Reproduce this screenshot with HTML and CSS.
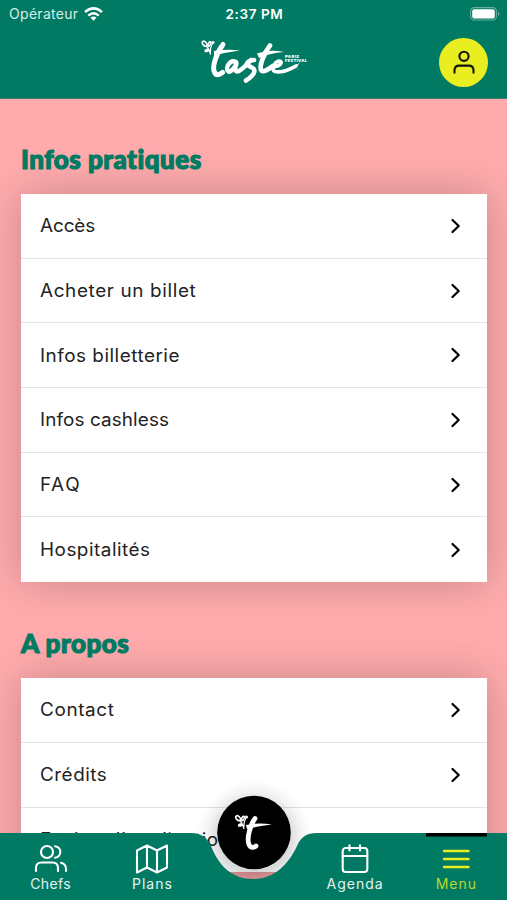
FILE: index.html
```html
<!DOCTYPE html>
<html lang="fr">
<head>
<meta charset="utf-8">
<title>Menu</title>
<link rel="stylesheet" href="styles.css">
</head>
<body>
<svg class="defs" width="0" height="0">
  <symbol id="chevron" viewBox="0 0 10 16"><path d="M1.5 2 L7.7 8 L1.5 14" fill="none" stroke="#000" stroke-width="2.2" stroke-linecap="round" stroke-linejoin="round"/></symbol>
  <symbol id="sprig" viewBox="0 0 16 17"><g fill="none" stroke="#fff" stroke-width="1.6"><ellipse cx="3.6" cy="4.2" rx="2.8" ry="1.8" transform="rotate(48 3.6 4.2)"/><ellipse cx="8.4" cy="4.4" rx="2.3" ry="1.1" transform="rotate(-65 8.4 4.4)"/></g><g fill="#fff"><ellipse cx="5.8" cy="11" rx="2.5" ry="1.7" transform="rotate(-15 5.8 11)"/><circle cx="12" cy="3" r="1.5"/></g><path d="M5 6 Q8 9 9.6 15 M11.6 3.5 Q9 8 9.4 13" fill="none" stroke="#fff" stroke-width="1.2"/></symbol>
</svg>
<div class="app">
  <header class="header">
    <div class="status">
      <div class="carrier"><span class="carrier-name">Opérateur</span>
        <svg width="19" height="14" viewBox="0 0 19 14"><g fill="none" stroke="#fff" stroke-width="2.5"><path d="M1 5.1 Q9.5 -2.3 18 5.1"/><path d="M4.3 8.6 Q9.5 4 14.7 8.6"/></g><path d="M6.5 10.7 Q9.5 8.3 12.5 10.7 L9.5 13.7Z" fill="#fff"/></svg>
      </div>
      <span class="clock">2:37 PM</span>
      <svg class="battery" width="30" height="14" viewBox="0 0 30 14"><rect x=".6" y=".6" width="25.8" height="12.4" rx="3.6" fill="none" stroke="#69b2a0" stroke-width="1.1"/><rect x="2.2" y="2.2" width="22.6" height="9.2" rx="2" fill="#fff"/><path d="M28 4.7 Q31 6.8 28 8.9Z" fill="#69b2a0"/></svg>
    </div>
    <div class="brand">
      <svg class="logo" width="110" height="50" viewBox="200 35 110 50">
        <use href="#sprig" x="201" y="39.5" width="16" height="17"/>
        <g fill="none" stroke="#fff" stroke-linecap="round" stroke-linejoin="round">
          <path d="M223 44.5 C217 52 211.5 67 214.5 72 C216 76 219 75 222.5 72.5" stroke-width="5"/>
          <path d="M236 62 C230 59 225 68 228 71 C230 74 236 66 236.5 63.5 C234 69 235 73 239 71 C243 69 246 65 251 60" stroke-width="4.5"/>
          <path d="M254 60 C246 61 245 65 251 67 C258 70 253 76 246 80.5" stroke-width="4.6"/>
          <path d="M270 45.5 C264 53 258.5 67 261.5 70.5 C264 73 270 68 273 66" stroke-width="4.8"/>
          <path d="M273 67 C281 66 283 61.5 279.5 61 C275 61 270 70 275 71.5 C281 73 289 70 296 66" stroke-width="3.7"/>
        </g>
        <path d="M214 51 Q228 49 240 50.5 Q228 52 214 55.5Z M257 53.5 Q269 49 284 52 Q270 53 259 58Z M283 70 Q291 67 300 63 Q292 72 282 73.4Z" fill="#fff"/>
        <text x="285" y="57.7" class="logo-small" textLength="14">PARIS</text>
        <text x="285" y="61.5" class="logo-small" textLength="22">FESTIVAL</text>
        <circle cx="298" cy="69" r=".6" fill="#9ccbbf"/>
      </svg>
      <a class="profile"><svg width="24" height="26" viewBox="0 0 24 26" fill="none" stroke="#17150a" stroke-width="2.1"><circle cx="12" cy="7.3" r="4.6"/><path d="M2.5 23.7V21.3Q2.5 16.6 7.2 16.6H16.8Q21.5 16.6 21.5 21.3V23.7" stroke-linecap="round"/></svg></a>
    </div>
  </header>
  <main class="content">
    <h2 class="title title-a">Infos pratiques</h2>
    <ul class="list">
      <li class="row"><span class="label tight">Accès</span><svg class="chev"><use href="#chevron"/></svg></li>
      <li class="row"><span class="label wide">Acheter un billet</span><svg class="chev"><use href="#chevron"/></svg></li>
      <li class="row"><span class="label">Infos billetterie</span><svg class="chev"><use href="#chevron"/></svg></li>
      <li class="row"><span class="label snug">Infos cashless</span><svg class="chev"><use href="#chevron"/></svg></li>
      <li class="row"><span class="label caps">FAQ</span><svg class="chev"><use href="#chevron"/></svg></li>
      <li class="row"><span class="label">Hospitalités</span><svg class="chev"><use href="#chevron"/></svg></li>
    </ul>
    <h2 class="title title-b">A propos</h2>
    <ul class="list">
      <li class="row"><span class="label wide">Contact</span><svg class="chev"><use href="#chevron"/></svg></li>
      <li class="row"><span class="label">Crédits</span><svg class="chev"><use href="#chevron"/></svg></li>
      <li class="row"><span class="label">Evaluer l'application</span><svg class="chev"><use href="#chevron"/></svg></li>
    </ul>
  </main>
  <nav class="tabbar">
    <svg class="tabbar-bg" width="507" height="130" viewBox="0 770 507 130">
      <defs><radialGradient id="halo"><stop offset=".6" stop-color="#000" stop-opacity=".15"/><stop offset=".8" stop-color="#000" stop-opacity=".05"/><stop offset="1" stop-color="#000" stop-opacity="0"/></radialGradient></defs>
      <circle cx="254" cy="838" r="58" fill="url(#halo)"/>
      <path d="M0 833H191C202 833 207 838 211 846C219 866 232 879 253 879C274 879 288 865 297 846C301 837 306 833 317 833H507V900H0Z" fill="#007a62"/>
      <path d="M426 833H487V836.5H426Z" fill="#000"/>
      <circle cx="254" cy="832.5" r="36.8" fill="#000"/>
      <use href="#sprig" x="234.5" y="814" width="16" height="17"/>
      <path d="M255 818.5C250 825 246.5 839 249 844.5C250.5 848 254 848 256 846" fill="none" stroke="#fff" stroke-width="4.8" stroke-linecap="round"/>
      <path d="M246 825Q258 822.5 272 824.5Q258 826 247 829Z" fill="#fff"/>
    </svg>
    <a class="tab"><svg width="34" height="30" viewBox="0 0 34 30" fill="none" stroke="#fff" stroke-width="2.1" stroke-linecap="round"><circle cx="13" cy="8" r="6"/><path d="M21 2.3C28 3 28 13 21 13.7M2 27V24Q2 18.5 7.5 18.5H18.5Q24 18.5 24 24V27M27 18.8Q32 20 32 25V27"/></svg><span>Chefs</span></a>
    <a class="tab"><svg width="34" height="30" viewBox="0 0 34 30" fill="none" stroke="#fff" stroke-width="2.1" stroke-linejoin="round"><path d="M2 6.5L12 1.5L22 6.5L32 1.5V23.5L22 28.5L12 23.5L2 28.5ZM12 1.5V23.5M22 6.5V28.5"/></svg><span class="wider">Plans</span></a>
    <span class="tab"></span>
    <a class="tab"><svg width="34" height="30" viewBox="0 0 34 30" fill="none" stroke="#fff" stroke-width="2.1" stroke-linecap="round"><rect x="4.7" y="4" width="24.6" height="24" rx="3"/><path d="M4.7 12H29.3M11.5 1.3V6.5M22 1.3V6.5"/></svg><span class="wider">Agenda</span></a>
    <a class="tab active"><svg width="34" height="30" viewBox="0 0 34 30" fill="none" stroke="#e9ee20" stroke-width="2.5" stroke-linecap="round"><path d="M5 7H29.5M5 15H29.5M5 23H29.5"/></svg><span class="wider">Menu</span></a>
  </nav>
</div>
</body>
</html>
```
FILE: styles.css
```css
* { box-sizing: border-box; }
body { margin: 0; font-family: Inter, "Liberation Sans", sans-serif; }
.defs { position: absolute; }
.app { position: relative; width: 507px; height: 900px; overflow: hidden; background: #ffabad; display: flex; flex-direction: column; }
.header { height: 99px; flex: none; background: #007a62; border-bottom: 1px solid #407b68; position: relative; z-index: 1; }
.status { height: 27px; padding: 0 7px 0 9px; display: grid; grid-template-columns: 1fr auto 1fr; align-items: center; color: #fff; }
.carrier { display: flex; align-items: center; gap: 6px; font-size: 14px; color: #d9ece7; }
.carrier-name { letter-spacing: .3px; }
.clock { font-size: 13.5px; font-weight: 600; letter-spacing: .6px; }
.battery { justify-self: end; }
.brand { height: 70px; display: grid; grid-template-columns: 1fr 110px 1fr; align-items: center; padding: 0 19px 0 20px; }
.logo { grid-column: 2; margin: -4px 0 0 1px; }
.logo-small { font-size: 4px; font-weight: 900; fill: #fff; }
.profile { justify-self: end; width: 49px; height: 49px; border-radius: 50%; background: #e9ee20; display: flex; align-items: center; justify-content: center; }
.content { padding: 0 20px 0 21px; }
.title { margin: 0; font-family: Lato, sans-serif; font-weight: 900; font-size: 26px; line-height: 32px; letter-spacing: .5px; font-variant-ligatures: none; color: #007a62; -webkit-text-stroke: 1.2px #007a62; white-space: nowrap; }
.title-a { margin-top: 44px; }
.title-b { margin-top: 45px; }
.list { margin: 19px 0 0; padding: 0; list-style: none; background: #fff; box-shadow: 0 0 40px rgba(0, 0, 0, .22); }
.row { height: 64.7px; display: flex; align-items: center; justify-content: space-between; padding: 0 26px 0 19px; border-bottom: 1px solid #e2e3e3; font-size: 18px; color: #222; white-space: nowrap; }
.row:last-child { border-bottom: 0; }
.label { transform: scaleX(1.05); transform-origin: left center; letter-spacing: .48px; }
.wide { letter-spacing: .6px; }
.snug { letter-spacing: .1px; }
.tight { letter-spacing: -.1px; }
.caps { letter-spacing: 1.6px; }
.chev { width: 10px; height: 16px; }
.tabbar { position: absolute; left: 0; bottom: 0; width: 507px; height: 67px; display: grid; grid-template-columns: repeat(5, 101.3px); }
.tabbar-bg { position: absolute; left: 0; bottom: 0; }
.tab { position: relative; display: flex; flex-direction: column; align-items: center; padding-top: 11px; font-size: 14px; line-height: 20px; letter-spacing: .4px; color: #e6f2ef; }
.wider { letter-spacing: 1px; margin-right: -1px; }
.active { color: #b9d92d; }
```
